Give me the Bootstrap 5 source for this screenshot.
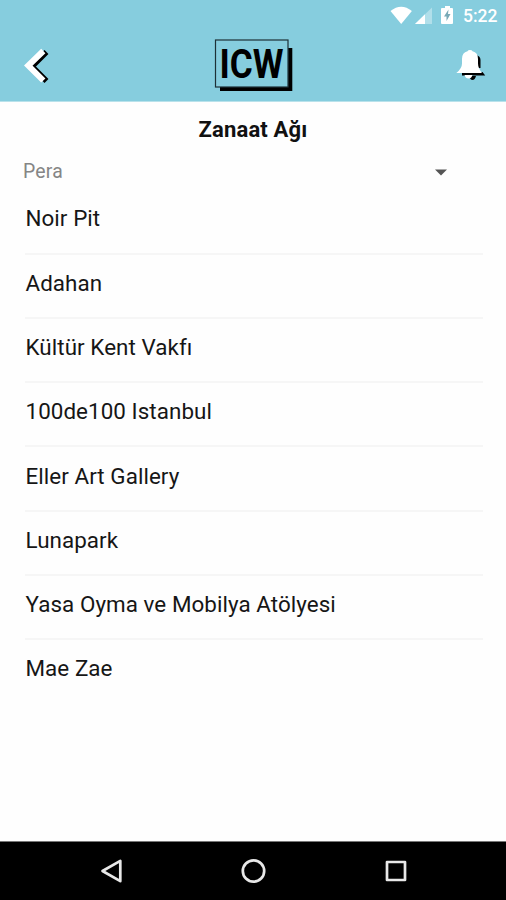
<!DOCTYPE html>
<html lang="tr">
<head>
<meta charset="utf-8">
<meta name="viewport" content="width=device-width, initial-scale=1">
<title>Zanaat Ağı</title>
<link href="https://cdn.jsdelivr.net/npm/bootstrap@5.3.0/dist/css/bootstrap.min.css" rel="stylesheet">
<style>
body{font-family:Roboto,"Noto Sans",sans-serif;color:#111;background:#fefefe;height:900px;overflow:hidden}
.app-head{background:#86cdde;height:101px;border-bottom:1px solid #b9e2eb;box-sizing:content-box}
.status{height:31px;padding-right:9px;color:#fff}
.clock{font-size:17.5px;font-weight:500;line-height:32px;width:34px;margin-left:8px}
.bar{height:70px}
.side{width:72px}
.page-title{font-size:22px;font-weight:700;line-height:30px;margin-top:13px;letter-spacing:.15px}
.picker{height:42px;padding:0 59px 0 23px;color:#858585;font-size:19.4px;letter-spacing:.2px}
.places{padding:0 23px 0 25px;margin-top:-3px}
.places .list-group-item{height:64.25px;padding:0 0 0 .5px;line-height:28px;font-size:22.4px;letter-spacing:.06px;color:#161616;background:transparent;border-color:#f6f6f6;border-width:0 0 2px;padding-top:14.3px}
.places .list-group-item:first-child{height:66.5px;padding-top:16px}
.places .list-group-item:last-child{border-bottom:0}
.softkeys{height:59px;background:#000;border-top:1px solid #777}
</style>
</head>
<body class="d-flex flex-column">
<header class="app-head flex-shrink-0">
  <div class="status d-flex justify-content-end align-items-center">
    <svg width="66" height="31" viewBox="0 0 66 31" aria-hidden="true">
      <path d="M1.500 11Q12.200 2.400 22.900 11L12.200 24Z" fill="#fff"/>
      <path d="M26 24 43 7.500V24Z" fill="#fff" opacity=".36"/>
      <path d="M26 24 36 14.300V24Z" fill="#fff"/>
      <path d="M53 8h3V6h5v2h2q1 0 1 1v14q0 1-1 1H53q-1 0-1-1V9q0-1 1-1Z" fill="#fff"/>
      <path d="M59.500 9.500 55 16.500h2.500V21L61.500 14h-2.500Z" fill="#78a9b6"/>
    </svg>
    <span class="clock text-nowrap">5:22</span>
  </div>
  <div class="bar d-flex justify-content-between">
    <svg class="side" height="70" viewBox="0 0 72 70" fill="none" role="img" aria-label="Geri">
      <path d="M46.500 21 32 35.500 46.500 50" stroke="#000" stroke-width="5.500"/>
      <path d="M43.300 20 28.300 34.500 43.300 49.500" stroke="#fff" stroke-width="6"/>
    </svg>
    <svg width="110" height="70" viewBox="0 0 110 70" role="img" aria-label="ICW">
      <path d="M92.200 17v41H22" fill="none" stroke="#000" stroke-width="4.200"/>
      <rect x="17.500" y="9" width="72.500" height="47" fill="#86cdde" stroke="#1d3036" stroke-width="1.200"/>
      <text x="21.500" y="47.300" font-family="Roboto,sans-serif" font-size="40" font-weight="700" textLength="64" lengthAdjust="spacingAndGlyphs">ICW</text>
    </svg>
    <svg class="side" height="70" viewBox="0 0 72 70" role="img" aria-label="Bildirimler">
      <path d="M42 24q4.500 1 4.500 5v8H42ZM28 41h20.500l2.700 3.500H28ZM35.500 45h6.500q-1 4-3.500 4t-3-4Z" fill="#000"/>
      <path d="M22.300 42Q28 37.500 28 32.500V28q0-6.500 5.500-7.700 .5-1.300 2.500-1.300t2.500 1.300q5.500 1.200 5.500 7.700v4.500q0 4.500 4 9.500Z" fill="#fff"/>
      <path d="M30.500 44h8q-1 3.500-4 3.500t-4-3.500Z" fill="#fff"/>
    </svg>
  </div>
</header>
<main class="flex-grow-1">
  <h1 class="page-title text-center mb-0">Zanaat Ağı</h1>
  <div class="picker d-flex align-items-center justify-content-between mt-1">
    <span class="lh-1 pt-1">Pera</span>
    <svg class="mt-1" width="12" height="7" viewBox="0 0 12 7" aria-hidden="true"><path d="M0 .500h12L6 6.500Z" fill="#555"/></svg>
  </div>
  <ul class="places list-group list-group-flush">
    <li class="list-group-item">Noir Pit</li>
    <li class="list-group-item">Adahan</li>
    <li class="list-group-item">Kültür Kent Vakfı</li>
    <li class="list-group-item">100de100 Istanbul</li>
    <li class="list-group-item">Eller Art Gallery</li>
    <li class="list-group-item">Lunapark</li>
    <li class="list-group-item">Yasa Oyma ve Mobilya Atölyesi</li>
    <li class="list-group-item">Mae Zae</li>
  </ul>
</main>
<nav class="softkeys flex-shrink-0" aria-label="Sistem">
  <svg class="d-block" width="506" height="58" viewBox="0 0 506 58" fill="none" stroke="#e8e8e8" stroke-width="2.700" stroke-linejoin="round">
    <path d="M102.500 29 120.300 18.800V39.200Z"/>
    <circle cx="253.500" cy="29" r="10.700"/>
    <rect x="387" y="20" width="18" height="18"/>
  </svg>
</nav>
<script src="https://cdn.jsdelivr.net/npm/bootstrap@5.3.0/dist/js/bootstrap.bundle.min.js"></script>
</body>
</html>
